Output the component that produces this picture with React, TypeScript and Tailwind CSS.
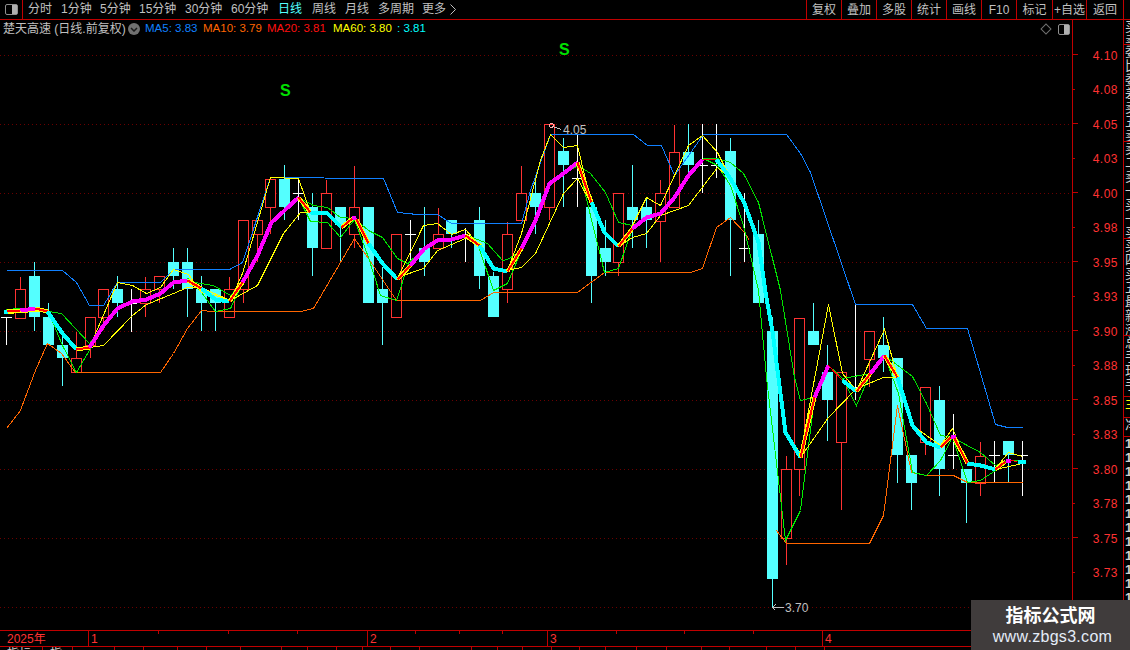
import React from 'react';

const FONT = 'font-["Liberation_Sans","Noto_Sans_CJK_SC",sans-serif]';

const leftTabs = [
  { label: '分时', w: 'w-[33px]' },
  { label: '1分钟', w: 'w-[39px]' },
  { label: '5分钟', w: 'w-[39px]' },
  { label: '15分钟', w: 'w-[46px]' },
  { label: '30分钟', w: 'w-[46px]' },
  { label: '60分钟', w: 'w-[47px]' },
  { label: '日线', w: 'w-[34px]', active: true },
  { label: '周线', w: 'w-[33px]' },
  { label: '月线', w: 'w-[33px]' },
  { label: '多周期', w: 'w-[44px]' },
];

const rightTabs = [
  { label: '复权', w: 'w-[35px]' },
  { label: '叠加', w: 'w-[35px]' },
  { label: '多股', w: 'w-[35px]' },
  { label: '统计', w: 'w-[35px]' },
  { label: '画线', w: 'w-[35px]' },
  { label: 'F10', w: 'w-[35px]' },
  { label: '标记', w: 'w-[36px]' },
  { label: '+自选', w: 'w-[34px]' },
  { label: '返回', w: 'w-[37px]' },
];

const priceLabels = ['4.10', '4.08', '4.05', '4.03', '4.00', '3.98', '3.95', '3.93', '3.90', '3.88', '3.85', '3.83', '3.80', '3.78', '3.75', '3.73'];

// [type, bodyTop, bodyBottom, wickTop, wickBottom]  c=cyan r=red w=white doji
type Candle = [string, number, number, number, number];
const candles: Candle[] = [
  ['w', 317, 317, 317, 345], ['r', 289, 318, 277, 318], ['c', 276, 317, 262, 331], ['c', 317, 345, 303, 345],
  ['c', 345, 358, 337, 386], ['r', 358, 372, 332, 372], ['r', 317, 345, 317, 358], ['r', 289, 317, 289, 330],
  ['c', 289, 303, 276, 317], ['w', 303, 303, 289, 332], ['r', 289, 303, 277, 317], ['r', 276, 289, 276, 303],
  ['c', 262, 276, 248, 289], ['c', 262, 289, 248, 317], ['c', 289, 303, 276, 331], ['c', 289, 303, 289, 331],
  ['r', 289, 317, 277, 317], ['r', 220, 289, 220, 303], ['r', 220, 234, 220, 262], ['r', 179, 207, 179, 234],
  ['c', 179, 207, 165, 220], ['w', 193, 193, 180, 220], ['c', 207, 248, 193, 276], ['r', 193, 248, 180, 248],
  ['c', 207, 225, 207, 262], ['r', 207, 234, 166, 248], ['c', 207, 303, 207, 303], ['c', 289, 303, 267, 345],
  ['r', 234, 317, 234, 317], ['w', 234, 234, 220, 262], ['c', 248, 262, 207, 276], ['r', 234, 248, 208, 248],
  ['c', 220, 234, 220, 248], ['w', 235, 235, 228, 262], ['c', 220, 276, 207, 289], ['c', 276, 317, 272, 317],
  ['r', 234, 289, 222, 303], ['r', 193, 220, 166, 220], ['c', 193, 207, 179, 234], ['r', 124, 207, 124, 220],
  ['c', 151, 165, 138, 207], ['w', 178, 178, 135, 207], ['c', 207, 276, 207, 303], ['c', 248, 262, 220, 276],
  ['r', 193, 262, 193, 276], ['c', 207, 220, 165, 248], ['c', 207, 220, 197, 248], ['r', 193, 221, 180, 262],
  ['r', 152, 207, 125, 207], ['c', 152, 165, 124, 178], ['w', 165, 165, 124, 193], ['w', 165, 165, 124, 178],
  ['c', 151, 220, 138, 276], ['w', 248, 248, 193, 262], ['c', 234, 303, 220, 303], ['c', 331, 579, 317, 607],
  ['r', 469, 538, 456, 565], ['r', 318, 469, 318, 496], ['c', 331, 345, 303, 345], ['c', 372, 400, 345, 441],
  ['r', 372, 442, 372, 510], ['w', 387, 387, 303, 400], ['r', 331, 359, 331, 387], ['c', 345, 358, 317, 372],
  ['c', 358, 455, 358, 483], ['c', 455, 483, 455, 510], ['r', 387, 442, 387, 455], ['c', 400, 469, 386, 496],
  ['w', 455, 455, 414, 469], ['c', 469, 483, 469, 523], ['r', 456, 483, 442, 496], ['w', 455, 455, 441, 483],
  ['c', 441, 455, 441, 483], ['w', 455, 455, 441, 496],
];

const blue = '6,270 62,270 76,282 89,305 103,305 117,282 160,282 173,269 229,269 242,262 270,177 376,178 383,178 397,212 417,214 437,214 451,223 521,223 530,190 550,134 633,134 647,145 661,145 674,175 703,134 786,134 800,153 810,172 855,304 912,304 926,328 967,328 995,424 1007,427 1022,427';
const orangeLeft = '6,428 20,410 24,399 35,370 47,343 61,353 75,372 160,372 173,353 187,328 201,310 212,311 300,311 313,308 354,238 368,258 396,300 480,300 493,292 577,292 604,272 690,272 702,268 716,227 730,217 744,232 749,240';
const orangeRight = '776,530 786,543 869,543 883,515 897,405 911,472 926,475 953,475 967,482 1022,482';
const yellow = '6,313 20,312 34,308 47,310 62,333 76,349 89,347 117,282 132,285 146,293 160,287 173,269 188,274 201,292 215,295 230,300 242,273 270,177 298,178 310,212 327,214 341,226 354,217 368,242 382,263 397,278 423,225 437,223 451,234 465,229 479,245 493,268 507,270 521,233 540,160 550,134 563,147 577,145 590,200 604,232 618,246 632,225 646,197 660,205 688,145 702,135 717,152 730,178 744,203 758,242 765,292 772,331 785,432 800,453 828,304 842,373 856,390 884,329 897,377 912,425 926,442 940,445 952,428 967,463 995,468 1008,452 1022,456';
const yellowSlow = '7,313 48,310 62,333 76,349 89,347 103,345 132,315 146,304 173,293 187,287 200,287 230,300 257,285 283,233 300,212 310,212 327,213 341,227 354,217 368,243 382,263 397,277 423,268 437,250 465,238 480,243 493,268 507,270 521,267 535,253 563,193 577,178 590,202 604,232 618,246 632,237 646,233 660,215 688,205 717,167 730,178 744,203 758,242 765,292 772,331 785,432 800,457 828,417 856,388 883,377 897,377 912,425 940,445 952,435 967,463 995,469 1022,463';
const greenFast = '6,309 20,308 34,308 48,311 62,345 76,372 90,348 103,325 117,308 132,301 146,299 160,293 173,282 188,278 201,292 215,311 230,308 242,283 257,255 271,222 284,210 298,197 310,221 327,222 340,237 354,219 368,257 380,295 396,300 408,263 424,248 437,240 451,239 467,235 477,243 493,290 507,283 521,250 535,220 549,183 563,173 578,165 590,215 604,272 618,268 632,228 646,217 660,213 674,197 688,175 703,158 717,165 730,185 743,225 758,290 766,377 785,540 800,510 814,397 828,365 842,378 870,373 884,355 898,393 912,472 926,475 940,460 952,437 967,482 980,480 995,470 1007,460 1022,460';
const greenSlow = '48,311 61,313 89,343 103,325 117,308 132,301 146,299 160,293 173,282 188,281 213,285 230,295 242,282 257,255 271,222 284,210 298,197 313,205 327,207 340,217 354,218 368,230 382,237 397,258 407,263 424,248 437,240 451,239 467,235 487,243 502,260 507,259 521,250 535,220 549,183 563,173 578,165 590,173 605,192 618,222 632,225 646,217 660,213 674,197 688,175 703,158 717,158 730,162 743,173 758,202 780,290 794,377 800,400 814,397 828,365 842,378 856,405 870,373 884,355 912,376 926,403 940,435 952,437 980,452 995,465 1008,460 1022,460';

// thick index line, one entry per coloured stretch
const thick: [string, string][] = [
  ['c', '3,311 7,311'], ['r', '7,311 20,310'], ['m', '20,310 35,308'], ['r', '35,308 47,311'],
  ['c', '47,311 62,333 76,349'], ['r', '76,349 89,347'],
  ['m', '89,347 103,325 117,308 132,301 146,299 160,293 173,282 187,280'], ['r', '187,280 201,288'],
  ['c', '201,288 215,299 229,301'], ['r', '229,301 242,282'],
  ['m', '242,282 257,255 271,222 284,210 298,197'], ['r', '298,197 310,212'],
  ['c', '310,212 327,213 341,227'], ['r', '341,227 352,218'], ['m', '352,218 356,217'], ['r', '356,219 368,243'],
  ['c', '368,243 382,263 397,279'], ['r', '397,279 410,265'],
  ['m', '410,265 424,248 437,240 451,239 465,235'], ['r', '465,235 479,245'],
  ['c', '479,245 493,268 507,271'], ['r', '507,271 521,248'],
  ['m', '521,248 535,220 549,183 563,173 577,162'], ['r', '577,162 591,202'],
  ['c', '591,202 604,232 618,246'], ['r', '618,246 632,228'],
  ['m', '632,228 646,217 660,213 674,197 688,175 702,159'], ['t', '702,159 716,159'],
  ['c', '716,159 730,178 744,203 758,242 765,292 772,331 785,432 800,457'], ['r', '800,457 814,397'],
  ['m', '814,397 828,365'], ['t', '828,365 842,380'], ['c', '842,380 856,391'], ['r', '856,391 870,373'],
  ['m', '870,373 884,355'], ['r', '884,355 897,377'],
  ['c', '897,377 912,425 926,442 940,447'], ['r', '940,447 950,437'], ['m', '950,436 955,436'], ['r', '954,438 967,463'],
  ['c', '967,463 980,465 995,469'], ['r', '995,469 1005,461'], ['m', '1005,460 1010,460'], ['t', '1010,460 1017,461'], ['c', '1017,461 1025,461'],
];

const gridYs = [55, 124, 193, 262, 331, 400, 469, 538, 607];

const timeCells = [
  { w: 'w-[88px]', label: '2025年', first: true },
  { w: 'w-[70px]', label: '1' },
  { w: 'w-[70px]' },
  { w: 'w-[69px]' },
  { w: 'w-[70px]' },
  { w: 'w-[48px]', label: '2' },
  { w: 'w-[44px]' },
  { w: 'w-[43px]' },
  { w: 'w-[45px]' },
  { w: 'w-[69px]', label: '3' },
  { w: 'w-[68px]' },
  { w: 'w-[69px]' },
  { w: 'w-[69px]' },
  { w: 'w-[308px]', label: '4' },
];

const bottomWidths = ['w-[43px]', 'w-[30px]', 'w-[42px]', 'w-[29px]', 'w-[34px]', 'w-[29px]', 'w-[34px]', 'w-[41px]', 'w-[26px]', 'w-[29px]', 'w-[26px]', 'w-[28px]', 'w-[29px]', 'w-[52px]', 'w-[26px]', 'w-[25px]', 'w-[29px]', 'w-[28px]', 'w-[26px]', 'w-[31px]', 'w-[30px]', 'w-[35px]', 'w-[28px]', 'w-[37px]', 'w-[29px]', 'w-[29px]'];

const stripBlocks = [
  { h: 'h-[25px]', text: '买卖盘' },
  { h: 'h-[97px]', text: '委比委差卖五卖四卖三' },
  { h: 'h-[97px]', text: '卖二卖一买一买二买三' },
  { h: 'h-[97px]', text: '买四买五最新涨跌幅度' },
  { h: 'h-[61px]', text: '总手现手' },
  { h: 'h-[21px]', text: '主', yellow: true },
  { h: 'h-[19px]', text: '净' },
  { h: 'h-[193px]', text: '1111111111111', bold: true },
];

function TimeCell({ w, label, first }: { w: string; label?: string; first?: boolean }) {
  if (label) {
    return (
      <div className={`${w} h-full shrink-0 flex items-center text-[12px] leading-none text-[#ff3232] ${first ? 'pl-[7px]' : 'border-l border-[#c00000] pl-[2px]'}`}>
        {label}
      </div>
    );
  }
  return (
    <div className={`${w} h-full shrink-0`}>
      <div className="w-px h-[3px] bg-[#c00000]" />
    </div>
  );
}

function Chart() {
  return (
    <svg width={1072} height={592} viewBox="0 38 1072 592" className="block">
      {gridYs.map((y) => (
        <line key={y} x1={0} x2={1072} y1={y + 0.5} y2={y + 0.5} stroke="#6a0000" strokeDasharray="1 3" />
      ))}
      <g shapeRendering="crispEdges">
        {candles.map(([t, top, bot, wt, wb], i) => {
          const x = Math.round(6 + 13.92 * i);
          const color = t === 'c' ? '#54ffff' : t === 'r' ? '#ff3232' : '#ffffff';
          return (
            <g key={i}>
              <rect x={x} y={wt} width={1} height={wb - wt} fill={color} />
              {t === 'w' && <rect x={x - 5} y={top} width={11} height={1} fill={color} />}
              {t === 'c' && <rect x={x - 5} y={top} width={11} height={bot - top} fill={color} />}
              {t === 'r' && <rect x={x - 4.5} y={top + 0.5} width={10} height={bot - top} fill="#000" stroke={color} />}
            </g>
          );
        })}
        <g transform="translate(0.5 0.5)">
          <polyline points={blue} fill="none" stroke="#1080ff" />
          <polyline points={orangeLeft} fill="none" stroke="#ff6600" />
          <polyline points={orangeRight} fill="none" stroke="#ff6600" />
          <polyline points={greenSlow} fill="none" stroke="#00e000" />
          <polyline points={greenFast} fill="none" stroke="#00f000" />
          <polyline points={yellowSlow} fill="none" stroke="#ffff00" />
          <polyline points={yellow} fill="none" stroke="#ffff00" />
          {thick.map(([c, pts], i) => {
            if (c === 'r') {
              return (
                <g key={i}>
                  <polyline points={pts} fill="none" stroke="#ffff00" strokeWidth={4} />
                  <polyline points={pts} fill="none" stroke="#ff0000" strokeWidth={2} />
                </g>
              );
            }
            if (c === 't') return <polyline key={i} points={pts} fill="none" stroke="#ff0000" strokeWidth={1} />;
            return <polyline key={i} points={pts} fill="none" stroke={c === 'm' ? '#ff00ff' : '#00ffff'} strokeWidth={4} />;
          })}
          <polyline points="552,126 561,129" fill="none" stroke="#c0c0c0" />
          <circle cx={551} cy={125} r={2} fill="none" stroke="#ffb0b0" />
          <polyline points="772,607 783,607" fill="none" stroke="#c0c0c0" />
          <polyline points="775,604 772,607 775,610" fill="none" stroke="#c0c0c0" />
        </g>
      </g>
      <text x={563} y={134} fontSize={12} fill="#c0c0c0">4.05</text>
      <text x={785} y={612} fontSize={12} fill="#c0c0c0">3.70</text>
      <text x={280} y={96} fontSize={16} fontWeight="bold" fill="#00e000">S</text>
      <text x={559} y={55} fontSize={16} fontWeight="bold" fill="#00e000">S</text>
    </svg>
  );
}

export default function App() {
  return (
    <div className={`${FONT} relative w-[1130px] h-[650px] overflow-hidden bg-black text-[12px] text-[#c0c0c0] flex flex-col`}>
      {/* top toolbar */}
      <div className="h-[20px] shrink-0 border-b border-[#c00000] flex items-center">
        <div className="w-[24px] h-full border-r border-[#c00000] flex items-center justify-center">
          <div className="w-[13px] h-[11px] rounded-[2px] border border-[#909090] flex justify-end">
            <div className="w-[5px] h-full bg-[#b0b0b0]" />
          </div>
        </div>
        <div className="flex items-center pl-[5px] w-[783px] shrink-0">
          {leftTabs.map((t) => (
            <span key={t.label} className={`${t.w} shrink-0 whitespace-nowrap leading-[19px] ${t.active ? 'text-[#54ffff]' : ''}`}>
              {t.label}
            </span>
          ))}
          <span className="whitespace-nowrap leading-[19px]">更多</span>
          <svg width="6" height="11" viewBox="0 0 6 11" className="ml-[4px]">
            <path d="M0.5 0.5l5 5-5 5" fill="none" stroke="#c0c0c0" />
          </svg>
        </div>
        <div className="flex h-full">
          {rightTabs.map((t) => (
            <div key={t.label} className={`${t.w} shrink-0 h-full border-l border-[#c00000] flex items-center justify-center whitespace-nowrap`}>
              {t.label}
            </div>
          ))}
          <div className="w-[7px] h-full border-l border-[#c00000]" />
        </div>
      </div>

      {/* chart, price axis and side strip */}
      <div className="flex h-[610px] shrink-0">
        <div className="w-[1072px] shrink-0">
          <div className="h-[18px] flex items-center pl-[3px] whitespace-nowrap">
            <span className="w-[125px] shrink-0">楚天高速 (日线.前复权)</span>
            <div className="w-[12px] h-[12px] shrink-0 rounded-full bg-[#707070] flex items-center justify-center mr-[5px]">
              <svg width="8" height="5" viewBox="0 0 8 5"><path d="M1 1l3 3 3-3" fill="none" stroke="#1a1a1a" strokeWidth="1.5" /></svg>
            </div>
            <span className="w-[58px] shrink-0 text-[11.5px] text-[#1080ff]">MA5: 3.83</span>
            <span className="w-[64px] shrink-0 text-[11.5px] text-[#ff6600]">MA10: 3.79</span>
            <span className="w-[66px] shrink-0 text-[11.5px] text-[#ff1010]">MA20: 3.81</span>
            <span className="w-[64px] shrink-0 text-[11.5px] text-[#ffff00]">MA60: 3.80</span>
            <span className="w-[40px] shrink-0 text-[11.5px] text-[#00ffff]">: 3.81</span>
            <div className="ml-auto flex items-center gap-[8px] pr-[2px]">
              <div className="w-[8px] h-[8px] rotate-45 border border-[#707070]" />
              <div className="w-[12px] h-[11px] rounded-[2px] border border-[#909090] flex justify-end">
                <div className="w-[5px] h-full bg-[#b0b0b0]" />
              </div>
            </div>
          </div>
          <Chart />
        </div>

        <div className="w-[51px] shrink-0 border-l border-[#c00000] pt-[17.5px] text-[#ff3232]">
          {priceLabels.map((p, i) => (
            <div key={p} className="h-[34.5px] flex items-center">
              <div className={`h-px bg-[#c00000] ${i % 2 === 0 ? 'w-[5px]' : 'w-[2px]'}`} />
              <span className="ml-auto mr-[5px] pt-[2px] tracking-[0.5px]">{p}</span>
            </div>
          ))}
        </div>

        <div className="w-[7px] shrink-0 border-l border-[#c00000] overflow-hidden">
          {stripBlocks.map((b, i) => (
            <div key={i} className={`${b.h} border-b border-[#c00000] overflow-hidden text-[13px] leading-[14px] ${b.yellow ? 'text-[#ffff00]' : 'text-[#d0d0d0]'} ${b.bold ? 'font-bold' : ''}`}>
              <div className="w-[13px] ml-[1px] break-all">{b.text}</div>
            </div>
          ))}
        </div>
      </div>

      {/* date axis */}
      <div className="h-[17px] shrink-0 border-y border-[#c00000] flex">
        {timeCells.map((c, i) => (
          <TimeCell key={i} {...c} />
        ))}
      </div>

      {/* cut-off tab row at the bottom edge */}
      <div className="flex flex-1 overflow-hidden">
        {bottomWidths.map((w, i) => (
          <div key={i} className={`${w} shrink-0 border-r border-[#c00000] overflow-hidden pl-[7px] leading-[14px] text-[#d0d0d0]`}>
            {i < 2 ? '指标' : ''}
          </div>
        ))}
      </div>

      {/* site watermark */}
      <div className="absolute right-0 bottom-0 w-[159px] h-[50px] bg-[#403c3c] flex flex-col items-center pt-[5px]">
        <span className="text-[18px] leading-[22px] font-bold text-white">指标公式网</span>
        <span className="ml-[4px] text-[16px] leading-[20px] tracking-[0.3px] text-[#e4ecf8]">www.zbgs3.com</span>
      </div>
    </div>
  );
}
